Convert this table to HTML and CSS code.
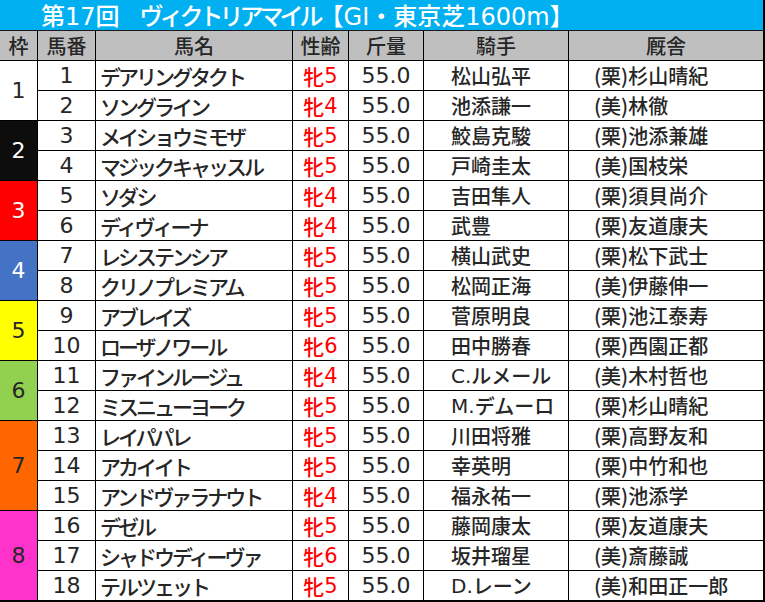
FILE: index.html
```html
<!DOCTYPE html>
<html lang="ja">
<head>
<meta charset="utf-8">
<title>第17回 ヴィクトリアマイル</title>
<link rel="stylesheet" href="styles.css">
</head>
<body>
<div class="sheet">
  <div class="title"><span class="lat">第17回</span><span class="kana">　ヴィクトリアマイル</span>【<span class="lat">GI</span>・東京芝<span class="lat">1600m</span>】</div>
  <div class="grid">
    <div class="h">枠</div><div class="h">馬番</div><div class="h">馬名</div><div class="h">性齢</div><div class="h">斤量</div><div class="h">騎手</div><div class="h">厩舎</div>

    <div class="waku w1 span2">1</div>
    <div class="num">1</div><div class="name">デアリングタクト</div><div class="sex">牝<span class="lat">5</span></div><div class="wt">55.0</div><div class="jk">松山弘平</div><div class="tr">(栗)杉山晴紀</div>
    <div class="num">2</div><div class="name">ソングライン</div><div class="sex">牝<span class="lat">4</span></div><div class="wt">55.0</div><div class="jk">池添謙一</div><div class="tr">(美)林徹</div>

    <div class="waku w2 span2">2</div>
    <div class="num">3</div><div class="name">メイショウミモザ</div><div class="sex">牝<span class="lat">5</span></div><div class="wt">55.0</div><div class="jk">鮫島克駿</div><div class="tr">(栗)池添兼雄</div>
    <div class="num">4</div><div class="name">マジックキャッスル</div><div class="sex">牝<span class="lat">5</span></div><div class="wt">55.0</div><div class="jk">戸崎圭太</div><div class="tr">(美)国枝栄</div>

    <div class="waku w3 span2">3</div>
    <div class="num">5</div><div class="name">ソダシ</div><div class="sex">牝<span class="lat">4</span></div><div class="wt">55.0</div><div class="jk">吉田隼人</div><div class="tr">(栗)須貝尚介</div>
    <div class="num">6</div><div class="name">ディヴィーナ</div><div class="sex">牝<span class="lat">4</span></div><div class="wt">55.0</div><div class="jk">武豊</div><div class="tr">(栗)友道康夫</div>

    <div class="waku w4 span2">4</div>
    <div class="num">7</div><div class="name">レシステンシア</div><div class="sex">牝<span class="lat">5</span></div><div class="wt">55.0</div><div class="jk">横山武史</div><div class="tr">(栗)松下武士</div>
    <div class="num">8</div><div class="name">クリノプレミアム</div><div class="sex">牝<span class="lat">5</span></div><div class="wt">55.0</div><div class="jk">松岡正海</div><div class="tr">(美)伊藤伸一</div>

    <div class="waku w5 span2">5</div>
    <div class="num">9</div><div class="name">アブレイズ</div><div class="sex">牝<span class="lat">5</span></div><div class="wt">55.0</div><div class="jk">菅原明良</div><div class="tr">(栗)池江泰寿</div>
    <div class="num">10</div><div class="name">ローザノワール</div><div class="sex">牝<span class="lat">6</span></div><div class="wt">55.0</div><div class="jk">田中勝春</div><div class="tr">(栗)西園正都</div>

    <div class="waku w6 span2">6</div>
    <div class="num">11</div><div class="name">ファインルージュ</div><div class="sex">牝<span class="lat">4</span></div><div class="wt">55.0</div><div class="jk"><span class="lat">C.</span>ルメール</div><div class="tr">(美)木村哲也</div>
    <div class="num">12</div><div class="name">ミスニューヨーク</div><div class="sex">牝<span class="lat">5</span></div><div class="wt">55.0</div><div class="jk"><span class="lat">M.</span>デムーロ</div><div class="tr">(栗)杉山晴紀</div>

    <div class="waku w7 span3">7</div>
    <div class="num">13</div><div class="name">レイパパレ</div><div class="sex">牝<span class="lat">5</span></div><div class="wt">55.0</div><div class="jk">川田将雅</div><div class="tr">(栗)高野友和</div>
    <div class="num">14</div><div class="name">アカイイト</div><div class="sex">牝<span class="lat">5</span></div><div class="wt">55.0</div><div class="jk">幸英明</div><div class="tr">(栗)中竹和也</div>
    <div class="num">15</div><div class="name">アンドヴァラナウト</div><div class="sex">牝<span class="lat">4</span></div><div class="wt">55.0</div><div class="jk">福永祐一</div><div class="tr">(栗)池添学</div>

    <div class="waku w8 span3 last">8</div>
    <div class="num">16</div><div class="name">デゼル</div><div class="sex">牝<span class="lat">5</span></div><div class="wt">55.0</div><div class="jk">藤岡康太</div><div class="tr">(栗)友道康夫</div>
    <div class="num">17</div><div class="name">シャドウディーヴァ</div><div class="sex">牝<span class="lat">6</span></div><div class="wt">55.0</div><div class="jk">坂井瑠星</div><div class="tr">(美)斎藤誠</div>
    <div class="num last">18</div><div class="name last">テルツェット</div><div class="sex last">牝<span class="lat">5</span></div><div class="wt last">55.0</div><div class="jk last"><span class="lat">D.</span>レーン</div><div class="tr last">(美)和田正一郎</div>
  </div>
</div>
</body>
</html>
```
FILE: styles.css
```css
html, body {
  margin: 0;
  padding: 0;
  background: #ffffff;
  overflow: hidden;
}

.sheet {
  box-sizing: border-box;
  width: 765px;
  height: 602px;
  border-right: 2px solid #000;
  border-bottom: 2px solid #000;
  font-family: "Noto Sans CJK JP", sans-serif;
  font-weight: 500;
  color: #262626;
}

.title {
  box-sizing: border-box;
  height: 31px;
  background: #00b0f0;
  border-bottom: 1px solid #1a1a1a;
  color: #ffffff;
  font-size: 24px;
  line-height: 30px;
  padding-left: 41px;
  white-space: nowrap;
}

.title .kana {
  letter-spacing: -4px;
}

.lat {
  font-family: "DejaVu Sans", "Noto Sans CJK JP", sans-serif;
}

.grid {
  display: grid;
  grid-template-columns: 38px 58px 197px 56px 75px 145px 194px;
  grid-template-rows: repeat(18, 30px) 29px;
}

.grid > div {
  box-sizing: border-box;
  border-right: 1px solid #000;
  border-bottom: 1px solid #000;
  display: flex;
  align-items: center;
  white-space: nowrap;
  font-size: 20px;
}

.grid > div:nth-child(7),
.grid > .tr {
  border-right: none;
}

.grid > .last {
  border-bottom: none;
}

.h {
  background: #bfbfbf;
  justify-content: center;
}

.waku {
  justify-content: center;
  font-family: "DejaVu Sans", sans-serif;
  font-size: 22px !important;
}

.span2 { grid-row: span 2; }
.span3 { grid-row: span 3; }

.w1 { background: #ffffff; color: #262626; }
.w2 { background: #0d0d0d; color: #ffffff; }
.w3 { background: #ff0000; color: #ffffff; }
.w4 { background: #4472c4; color: #ffffff; }
.w5 { background: #ffff00; color: #262626; }
.w6 { background: #92d050; color: #262626; }
.w7 { background: #ff6600; color: #262626; }
.w8 { background: #ff33cc; color: #262626; }

.num {
  justify-content: center;
  font-family: "DejaVu Sans", sans-serif;
  font-size: 22px !important;
}

.name {
  padding-left: 4px;
  letter-spacing: -3px;
  font-size: 21px !important;
}

.sex {
  justify-content: center;
  color: #ff0000;
  font-size: 21px !important;
}

.wt {
  justify-content: center;
  font-family: "DejaVu Sans", sans-serif;
  font-size: 22px !important;
}

.jk {
  padding-left: 27px;
}

.tr {
  padding-left: 25px;
}
```
